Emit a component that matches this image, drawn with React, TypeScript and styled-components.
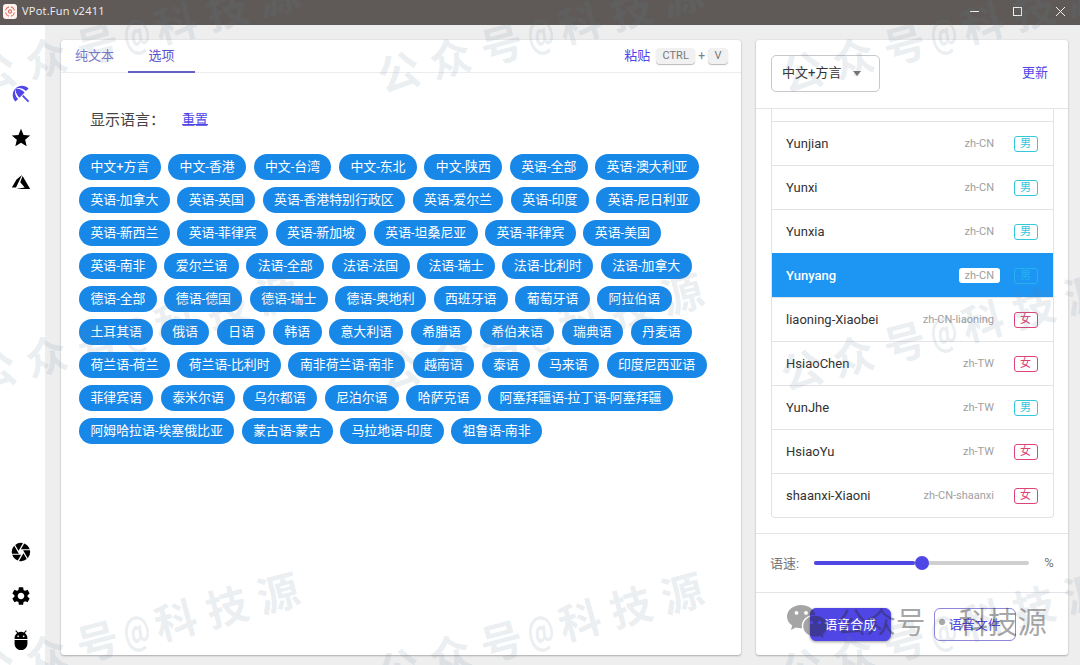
import React from "react";
import styled, { createGlobalStyle, css } from "styled-components";
import { MdBeachAccess, MdStar, MdCamera, MdSettings, MdAdb } from "react-icons/md";

const indigo = "#4f46e5";

const GlobalStyle = createGlobalStyle`
  * { box-sizing: border-box; }
  body {
    margin: 0;
    background: #eee;
    font-family: Roboto, "Noto Sans CJK SC", sans-serif;
    overflow: hidden;
  }
`;

const Window = styled.div`
  position: relative;
  width: 1080px;
  height: 665px;
  display: flex;
  flex-direction: column;
  overflow: hidden;
  background: #eee;
`;

const TitleBar = styled.header`
  height: 25px;
  flex: none;
  display: flex;
  align-items: center;
  background: #5f5a57;
  color: #f1f0ef;
  padding: 0 14px 3px 3px;
`;

const AppLogo = styled.svg`
  width: 14px;
  height: 15px;
  margin-right: 5px;
`;

const AppTitle = styled.span`
  flex: 1;
  font: 11px/16px "Open Sans", sans-serif;
  letter-spacing: 0.25px;
`;

const WindowControls = styled.div`
  display: flex;
  gap: 32px;

  svg {
    width: 11px;
    height: 11px;
    display: block;
  }
`;

const Body = styled.div`
  flex: 1;
  min-height: 0;
  display: flex;
`;

const Sidebar = styled.nav`
  width: 45px;
  flex: none;
  display: flex;
  flex-direction: column;
  justify-content: space-between;
  align-items: center;
  padding: 58px 4px 14px 0;
  background: #fff;
`;

const IconGroup = styled.div`
  display: flex;
  flex-direction: column;
  gap: 22px;
`;

const NavIcon = styled.div<{ $active?: boolean }>`
  width: 22px;
  height: 22px;
  color: ${(p) => (p.$active ? indigo : "#000")};

  svg {
    width: 22px;
    height: 22px;
    display: block;
  }
`;

const Main = styled.main`
  flex: 1;
  display: flex;
  gap: 15px;
  padding: 15px 12px 10px 16px;
`;

const Card = styled.section`
  background: #fff;
  border-radius: 3px;
  box-shadow: 0 1px 2px rgba(0, 0, 0, 0.26), 0 0 2px rgba(0, 0, 0, 0.1);
  display: flex;
  flex-direction: column;
`;

const EditorCard = styled(Card)`
  width: 680px;
`;

const VoiceCard = styled(Card)`
  width: 312px;
`;

const TabBar = styled.div`
  height: 33px;
  display: flex;
  border-bottom: 1px solid #ececf0;
  padding-right: 13px;
`;

const Tab = styled.div<{ $active?: boolean }>`
  width: 67px;
  height: 33px;
  line-height: 31px;
  text-align: center;
  font-size: 13px;
  color: ${(p) => (p.$active ? "#5a52cf" : "#7b76c9")};
  border-bottom: 2px solid ${(p) => (p.$active ? "#6560c4" : "transparent")};
`;

const PasteHint = styled.div`
  margin-left: auto;
  display: flex;
  align-items: center;
  color: #808080;
  font-size: 12px;
`;

const TextLink = styled.a`
  color: ${indigo};
  font-size: 13px;
  padding-bottom: 3px;
`;

const Key = styled.kbd<{ $wide?: boolean }>`
  width: ${(p) => (p.$wide ? 39 : 20)}px;
  height: 16px;
  text-align: center;
  font: 11px/15px Roboto, sans-serif;
  color: #777;
  background: #f1f1f1;
  border-radius: 4px;
  box-shadow: 0 1px 1px rgba(0, 0, 0, 0.28);
  margin: 0 ${(p) => (p.$wide ? 3 : 0)}px 0 ${(p) => (p.$wide ? 6 : 3)}px;
`;

const LanguageHeader = styled.div`
  display: flex;
  align-items: center;
  gap: 17px;
  padding: 35px 29px 0;
  height: 58px;
  font-size: 15px;
  line-height: 22px;
  color: #444;
`;

const ResetLink = styled(TextLink)`
  padding: 0;
  text-decoration: underline;
  text-underline-offset: 0;
`;

const ChipList = styled.div`
  display: flex;
  flex-wrap: wrap;
  gap: 7.3px 7.5px;
  padding: 23px 14px 0 18px;
`;

const Chip = styled.span`
  height: 25.7px;
  line-height: 25px;
  padding: 0 11.4px;
  border-radius: 13px;
  background: #1787e8;
  color: #fff;
  font-size: 12.9px;
  white-space: nowrap;
`;

const VoiceHeader = styled.div`
  height: 69px;
  flex: none;
  display: flex;
  align-items: center;
  justify-content: space-between;
  padding: 0 20px 2px 15px;
  border-bottom: 1px solid #e3e3e8;
`;

const Select = styled.div`
  width: 109px;
  height: 37px;
  display: flex;
  align-items: center;
  gap: 12px;
  padding: 0 0 3px 10px;
  border: 1px solid #c8c8cc;
  border-radius: 5px;
  font-size: 13px;
  color: #333;
`;

const Caret = styled.span`
  margin-top: 3px;
  border: 4.5px solid transparent;
  border-top: 5px solid #757575;
  border-bottom: 0;
`;

const VoiceScroll = styled.div`
  height: 424.5px;
  flex: none;
  padding: 0 14.5px 15px 15px;
  border-bottom: 1px solid #e3e3e8;
`;

const VoiceList = styled.div`
  border: 1px solid #e3e3e6;
  border-top: 0;
  border-radius: 0 0 4px 4px;
  padding-top: 12px;
`;

const Badge = styled.span<{ $male: boolean }>`
  width: 24px;
  height: 16px;
  border: 1px solid currentColor;
  border-radius: 3px;
  font-size: 11px;
  line-height: 13px;
  text-align: center;
  color: ${(p) => (p.$male ? "#35c6dc" : "#dc4377")};
`;

const Locale = styled.span`
  margin-left: auto;
  margin-right: 14px;
  padding: 0 5.5px;
  height: 15px;
  line-height: 15px;
  border-radius: 3px;
  font-size: 11px;
  color: #a0a0a0;
`;

const VoiceRow = styled.div<{ $selected?: boolean }>`
  height: 44px;
  display: flex;
  align-items: center;
  padding: 0 15px 0 14px;
  border-top: 1px solid #e3e3e6;
  font-size: 13px;
  color: #333;
  ${(p) =>
    p.$selected &&
    css`
      background: #1c95f3;
      border-color: #1c95f3;
      color: #fff;
      font-weight: 500;

      ${Locale} {
        background: #fff;
        font-weight: 400;
      }

      ${Badge} {
        font-weight: 400;
        color: #25b2ee;
      }
    `}
`;

const SpeedRow = styled.div`
  height: 59.5px;
  flex: none;
  display: flex;
  align-items: center;
  padding: 0 14px 0 14px;
  border-bottom: 1px solid #e3e3e8;
  font-size: 13px;
  color: #777;
`;

const Track = styled.div`
  width: 215px;
  height: 4px;
  margin: 0 15px 0 15px;
  border-radius: 2px;
  background: #cfcfcf;
  display: flex;
  align-items: center;
`;

const TrackFill = styled.div`
  width: 101px;
  height: 4px;
  border-radius: 2px;
  background: ${indigo};
`;

const Thumb = styled.div`
  width: 14px;
  height: 14px;
  border-radius: 50%;
  background: ${indigo};
`;

const Percent = styled.span`
  font-size: 13px;
`;

const Actions = styled.div`
  display: flex;
  gap: 43px;
  padding: 15px 0 0 53.5px;
`;

const ActionButton = styled.button<{ $primary?: boolean }>`
  width: 81.5px;
  height: 33px;
  padding: 0 0 1px;
  border-radius: 6px;
  font: 13px/29px Roboto, "Noto Sans CJK SC", sans-serif;
  border: 1px solid ${(p) => (p.$primary ? indigo : "#8d86da")};
  background: ${(p) => (p.$primary ? indigo : "transparent")};
  color: ${(p) => (p.$primary ? "#fff" : indigo)};
  box-shadow: ${(p) => (p.$primary ? "0 1px 3px rgba(0, 0, 0, 0.4)" : "none")};
`;

const WatermarkLayer = styled.div`
  position: absolute;
  inset: 0;
  overflow: hidden;
  pointer-events: none;
`;

const Stamp = styled.div<{ $x: number; $y: number }>`
  position: absolute;
  left: ${(p) => p.$x}px;
  top: ${(p) => p.$y}px;
  width: 346px;
  height: 60px;
  display: flex;
  align-items: center;
  transform: rotate(-15deg);
  font: 700 42px/60px "Noto Sans CJK SC", sans-serif;
  color: rgba(103, 131, 152, 0.14);

  span {
    width: 53px;
    text-align: center;
  }

  span:nth-child(4) {
    width: 28px;
    display: flex;
    justify-content: center;
    font-size: 38px;
    transform: scaleX(0.72);
  }
`;

const Signature = styled.div`
  position: absolute;
  left: 786px;
  top: 600px;
  display: flex;
  align-items: center;
  height: 40px;
  color: rgba(40, 40, 40, 0.42);
  font: 29.5px/40px "Noto Sans CJK SC", sans-serif;

  svg {
    width: 42px;
    height: 36px;
    margin-right: 9px;
  }
`;

const Dot = styled.span`
  width: 33px;
  text-align: center;
`;

const languages = [
  "中文+方言", "中文-香港", "中文-台湾", "中文-东北", "中文-陕西", "英语-全部", "英语-澳大利亚",
  "英语-加拿大", "英语-英国", "英语-香港特别行政区", "英语-爱尔兰", "英语-印度", "英语-尼日利亚",
  "英语-新西兰", "英语-菲律宾", "英语-新加坡", "英语-坦桑尼亚", "英语-菲律宾", "英语-美国",
  "英语-南非", "爱尔兰语", "法语-全部", "法语-法国", "法语-瑞士", "法语-比利时", "法语-加拿大",
  "德语-全部", "德语-德国", "德语-瑞士", "德语-奥地利", "西班牙语", "葡萄牙语", "阿拉伯语",
  "土耳其语", "俄语", "日语", "韩语", "意大利语", "希腊语", "希伯来语", "瑞典语", "丹麦语",
  "荷兰语-荷兰", "荷兰语-比利时", "南非荷兰语-南非", "越南语", "泰语", "马来语", "印度尼西亚语",
  "菲律宾语", "泰米尔语", "乌尔都语", "尼泊尔语", "哈萨克语", "阿塞拜疆语-拉丁语-阿塞拜疆",
  "阿姆哈拉语-埃塞俄比亚", "蒙古语-蒙古", "马拉地语-印度", "祖鲁语-南非",
];

const voices = [
  { name: "Yunjian", locale: "zh-CN", male: true },
  { name: "Yunxi", locale: "zh-CN", male: true },
  { name: "Yunxia", locale: "zh-CN", male: true },
  { name: "Yunyang", locale: "zh-CN", male: true, selected: true },
  { name: "liaoning-Xiaobei", locale: "zh-CN-liaoning", male: false },
  { name: "HsiaoChen", locale: "zh-TW", male: false },
  { name: "YunJhe", locale: "zh-TW", male: true },
  { name: "HsiaoYu", locale: "zh-TW", male: false },
  { name: "shaanxi-Xiaoni", locale: "zh-CN-shaanxi", male: false },
];

const stampColumns = [-37, 367, 770];
const stampRows = [2, 300, 599];

export default function App() {
  return (
    <>
      <GlobalStyle />
      <Window>
        <TitleBar>
          <AppLogo viewBox="0 0 14 15">
            <rect width="14" height="15" rx="3" fill="#fdf3f0" />
            <g fill="none" stroke="#e0705f" strokeWidth="1.1">
              <circle cx="7" cy="7.5" r="1.6" />
              <path d="M2.5 6.5A4.8 4.8 0 0 1 6 2.9M8 2.9a4.8 4.8 0 0 1 3.5 3.6M11.500 8.500A4.800 4.800 0 0 1 8 12.100M6 12.100A4.800 4.800 0 0 1 2.500 8.500" />
            </g>
          </AppLogo>
          <AppTitle>VPot.Fun v2411</AppTitle>
          <WindowControls>
            <svg viewBox="0 0 11 11" stroke="#f1f0ef" fill="none"><path d="M1 5.500h9" /></svg>
            <svg viewBox="0 0 11 11" stroke="#f1f0ef" fill="none"><rect x="1.500" y="1.500" width="8" height="8" /></svg>
            <svg viewBox="0 0 11 11" stroke="#f1f0ef" fill="none"><path d="M1 1l9 9M10 1l-9 9" /></svg>
          </WindowControls>
        </TitleBar>
        <Body>
          <Sidebar>
            <IconGroup>
              <NavIcon $active><MdBeachAccess /></NavIcon>
              <NavIcon><MdStar /></NavIcon>
              <NavIcon>
                <svg viewBox="0 0 24 24" fill="currentColor">
                  <path d="M13.050 4.240L6.560 18.050 2 18l5.090-8.760zM13.750 5.330L22 19.760H6.740l9.300-1.660-4.870-5.790z" />
                </svg>
              </NavIcon>
            </IconGroup>
            <IconGroup>
              <NavIcon><MdCamera /></NavIcon>
              <NavIcon><MdSettings /></NavIcon>
              <NavIcon><MdAdb /></NavIcon>
            </IconGroup>
          </Sidebar>
          <Main>
            <EditorCard>
              <TabBar>
                <Tab>纯文本</Tab>
                <Tab $active>选项</Tab>
                <PasteHint>
                  <TextLink>粘贴</TextLink>
                  <Key $wide>CTRL</Key>+<Key>V</Key>
                </PasteHint>
              </TabBar>
              <LanguageHeader>
                <span>显示语言：</span>
                <ResetLink>重置</ResetLink>
              </LanguageHeader>
              <ChipList>
                {languages.map((label, i) => (
                  <Chip key={i}>{label}</Chip>
                ))}
              </ChipList>
            </EditorCard>
            <VoiceCard>
              <VoiceHeader>
                <Select>中文+方言<Caret /></Select>
                <TextLink>更新</TextLink>
              </VoiceHeader>
              <VoiceScroll>
                <VoiceList>
                  {voices.map((v) => (
                    <VoiceRow key={v.name} $selected={v.selected}>
                      {v.name}
                      <Locale>{v.locale}</Locale>
                      <Badge $male={v.male}>{v.male ? "男" : "女"}</Badge>
                    </VoiceRow>
                  ))}
                </VoiceList>
              </VoiceScroll>
              <SpeedRow>
                语速:
                <Track>
                  <TrackFill />
                  <Thumb />
                </Track>
                <Percent>%</Percent>
              </SpeedRow>
              <Actions>
                <ActionButton $primary>语音合成</ActionButton>
                <ActionButton>语音文件</ActionButton>
              </Actions>
            </VoiceCard>
          </Main>
        </Body>
        <WatermarkLayer>
          {stampRows.map((y) =>
            stampColumns.map((x) => (
              <Stamp key={`${x}:${y}`} $x={x} $y={y}>
                {[..."公众号@科技源"].map((c) => (
                  <span key={c}>{c}</span>
                ))}
              </Stamp>
            ))
          )}
          <Signature>
            <svg viewBox="0 0 42 36" fill="currentColor" fillRule="evenodd">
              <path d="M15 3C7.500 3 1 8 1 14.600c0 3.800 2 6.900 5.200 9L5 28l4.800-2.500c2 .6 4 .8 6.200.7C14.500 18 21 12.500 29.500 12.700 28 7 22 3 15 3zM10.500 9a1.900 1.900 0 1 1 0 3.800 1.900 1.900 0 0 1 0-3.800zM20 9a1.900 1.900 0 1 1 0 3.800A1.900 1.900 0 0 1 20 9z" />
              <path d="M29.500 13.800c-7 0-12.300 4.700-12.300 10.400s5.300 10.400 12.300 10.400c1.500 0 3-.3 4.300-.7l4 2-1.100-3.500c2.800-2 4.500-4.800 4.500-8.200 0-5.700-5-10.400-11.700-10.400zM25.500 19a1.600 1.600 0 1 1 0 3.200 1.600 1.600 0 0 1 0-3.200zM33.500 19a1.600 1.600 0 1 1 0 3.200 1.600 1.600 0 0 1 0-3.200z" />
            </svg>
            <span>公众号</span>
            <Dot>·</Dot>
            <span>科技源</span>
          </Signature>
        </WatermarkLayer>
      </Window>
    </>
  );
}
